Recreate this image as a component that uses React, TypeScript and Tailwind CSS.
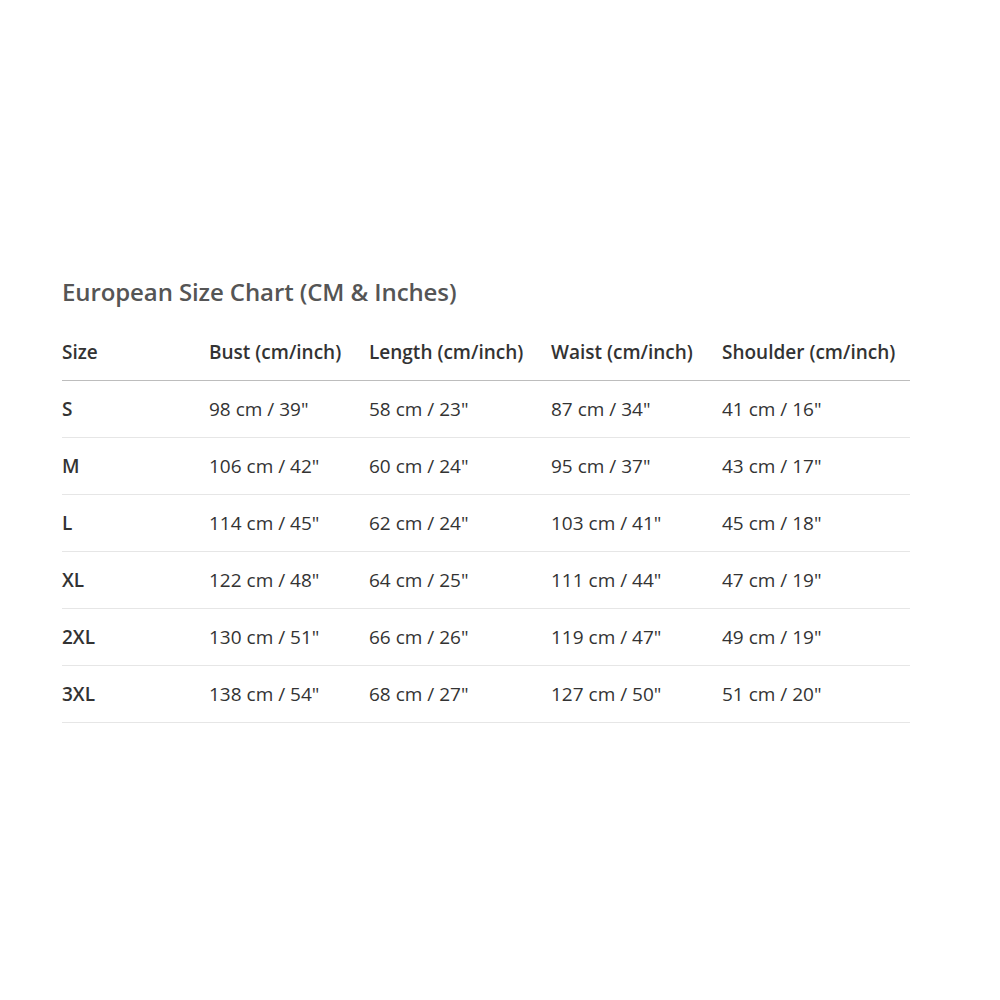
import React from "react";

const rows = [
  ["S", '98 cm / 39"', '58 cm / 23"', '87 cm / 34"', '41 cm / 16"'],
  ["M", '106 cm / 42"', '60 cm / 24"', '95 cm / 37"', '43 cm / 17"'],
  ["L", '114 cm / 45"', '62 cm / 24"', '103 cm / 41"', '45 cm / 18"'],
  ["XL", '122 cm / 48"', '64 cm / 25"', '111 cm / 44"', '47 cm / 19"'],
  ["2XL", '130 cm / 51"', '66 cm / 26"', '119 cm / 47"', '49 cm / 19"'],
  ["3XL", '138 cm / 54"', '68 cm / 27"', '127 cm / 50"', '51 cm / 20"'],
];

const headers = ["Size", "Bust (cm/inch)", "Length (cm/inch)", "Waist (cm/inch)", "Shoulder (cm/inch)"];

export default function App() {
  return (
    <div className="w-[1000px] h-[1000px] bg-white pt-[274px] pl-[62px]" style={{ fontFamily: '"Open Sans", "Noto Sans", sans-serif' }}>
      <h2 className="text-[24px] leading-[36px] font-semibold text-[#555555] tracking-[-0.1px]">European Size Chart (CM &amp; Inches)</h2>
      <div className="mt-[14px] w-[848px]">
        <div className="grid grid-cols-[147px_160px_182px_171px_188px] h-[57px] items-center border-b border-[#bdbdbd] text-[19px] font-semibold text-[#333333]">
          {headers.map((h) => (
            <div key={h} className="whitespace-nowrap">{h}</div>
          ))}
        </div>
        {rows.map((r) => (
          <div key={r[0]} className="grid grid-cols-[147px_160px_182px_171px_188px] h-[57px] items-center border-b border-[#e6e6e6] text-[19px] text-[#333333]">
            {r.map((c, i) => (
              <div key={i} className={i === 0 ? "font-semibold whitespace-nowrap" : "whitespace-nowrap"}>{c}</div>
            ))}
          </div>
        ))}
      </div>
    </div>
  );
}
